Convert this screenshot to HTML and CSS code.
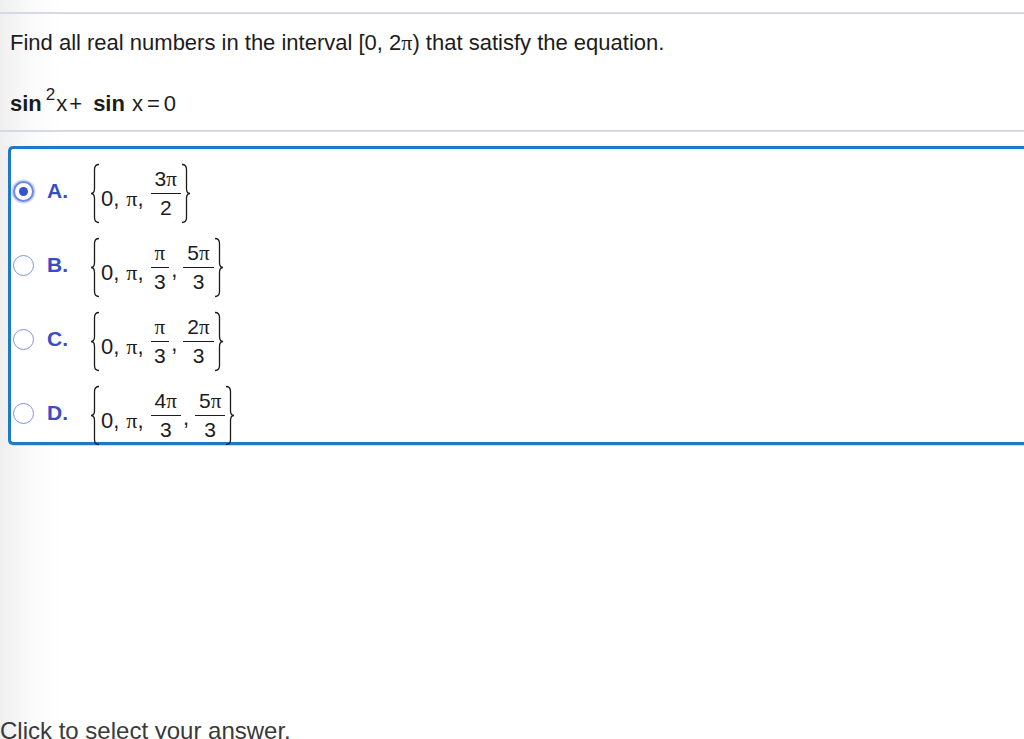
FILE: index.html
```html
<!DOCTYPE html>
<html lang="en">
  <head>
    <meta charset="UTF-8" />
    <meta name="viewport" content="width=device-width, initial-scale=1.0" />
    <title>Question</title>
    <link rel="stylesheet" href="styles.css">
  </head>
  <body>
    <div class="page">
      <div class="rule"></div>
      <p class="question">Find all real numbers in the interval [0, 2<i class="pi">π</i>) that satisfy the equation.</p>
      <p class="equation"><b>sin</b><sup>2</sup>x<span class="plus">+</span><b>sin</b><span class="arg">x</span><span class="eq">=</span>0</p>
      <div class="rule"></div>

      <div class="choices">
        <!-- A -->
        <div class="choice selected">
          <span class="radio"></span>
          <span class="letter">A.</span>
          <span class="set">
            <svg class="brace" viewBox="0 0 10 60"><path d="M9 1 Q4.5 1 4.5 6 L4.5 25 Q4.5 30 1 30 Q4.5 30 4.5 35 L4.5 54 Q4.5 59 9 59" /></svg>
            <span class="term">0,</span>
            <span class="term"><i class="pi">π</i>,</span>
            <span class="frac"><span class="num">3<i class="pi">π</i></span><span class="den">2</span></span>
            <svg class="brace" viewBox="0 0 10 60"><path d="M1 1 Q5.5 1 5.5 6 L5.5 25 Q5.5 30 9 30 Q5.5 30 5.5 35 L5.5 54 Q5.5 59 1 59" /></svg>
          </span>
        </div>
        <!-- B -->
        <div class="choice">
          <span class="radio"></span>
          <span class="letter">B.</span>
          <span class="set">
            <svg class="brace" viewBox="0 0 10 60"><path d="M9 1 Q4.5 1 4.5 6 L4.5 25 Q4.5 30 1 30 Q4.5 30 4.5 35 L4.5 54 Q4.5 59 9 59" /></svg>
            <span class="term">0,</span>
            <span class="term"><i class="pi">π</i>,</span>
            <span class="frac"><span class="num"><i class="pi">π</i></span><span class="den">3</span></span>
            <span class="comma">,</span>
            <span class="frac"><span class="num">5<i class="pi">π</i></span><span class="den">3</span></span>
            <svg class="brace" viewBox="0 0 10 60"><path d="M1 1 Q5.5 1 5.5 6 L5.5 25 Q5.5 30 9 30 Q5.5 30 5.5 35 L5.5 54 Q5.5 59 1 59" /></svg>
          </span>
        </div>
        <!-- C -->
        <div class="choice">
          <span class="radio"></span>
          <span class="letter">C.</span>
          <span class="set">
            <svg class="brace" viewBox="0 0 10 60"><path d="M9 1 Q4.5 1 4.5 6 L4.5 25 Q4.5 30 1 30 Q4.5 30 4.5 35 L4.5 54 Q4.5 59 9 59" /></svg>
            <span class="term">0,</span>
            <span class="term"><i class="pi">π</i>,</span>
            <span class="frac"><span class="num"><i class="pi">π</i></span><span class="den">3</span></span>
            <span class="comma">,</span>
            <span class="frac"><span class="num">2<i class="pi">π</i></span><span class="den">3</span></span>
            <svg class="brace" viewBox="0 0 10 60"><path d="M1 1 Q5.5 1 5.5 6 L5.5 25 Q5.5 30 9 30 Q5.5 30 5.5 35 L5.5 54 Q5.5 59 1 59" /></svg>
          </span>
        </div>
        <!-- D -->
        <div class="choice">
          <span class="radio"></span>
          <span class="letter">D.</span>
          <span class="set">
            <svg class="brace" viewBox="0 0 10 60"><path d="M9 1 Q4.5 1 4.5 6 L4.5 25 Q4.5 30 1 30 Q4.5 30 4.5 35 L4.5 54 Q4.5 59 9 59" /></svg>
            <span class="term">0,</span>
            <span class="term"><i class="pi">π</i>,</span>
            <span class="frac"><span class="num">4<i class="pi">π</i></span><span class="den">3</span></span>
            <span class="comma">,</span>
            <span class="frac"><span class="num">5<i class="pi">π</i></span><span class="den">3</span></span>
            <svg class="brace" viewBox="0 0 10 60"><path d="M1 1 Q5.5 1 5.5 6 L5.5 25 Q5.5 30 9 30 Q5.5 30 5.5 35 L5.5 54 Q5.5 59 1 59" /></svg>
          </span>
        </div>
      </div>

      <p class="hint">Click to select your answer.</p>
    </div>
  </body>
</html>
```

FILE: styles.css
```css
html,
body {
  margin: 0;
  height: 100%;
}
body {
  font-family: "Liberation Sans", Arial, sans-serif;
  color: #1c1c1c;
  background: linear-gradient(to right, #efefef 0, #fafafa 30px, #fff 60px);
  overflow: hidden;
}
.page {
  padding-top: 12px;
}
.rule {
  height: 2px;
  background: #d6d8e4;
}
.question {
  margin: 16px 0 0 10px;
  font-size: 22px;
  line-height: 26px;
}
.pi {
  font-family: "Liberation Serif", "Times New Roman", serif;
  font-style: normal;
}
.equation {
  margin: 35px 0 13px 10px;
  font-size: 22px;
  line-height: 26px;
}
.equation sup {
  font-size: 17px;
  vertical-align: 11px;
  line-height: 0;
  margin: 0 1px 0 4px;
}
.equation .plus {
  margin: 0 11px 0 2px;
}
.equation .arg {
  margin-left: 7px;
}
.equation .eq {
  margin: 0 4px;
}

/* answer box */
.choices {
  margin: 14px -20px 0 8px;
  border: 3px solid #1c7acb;
  border-right: none;
  border-radius: 5px 0 0 5px;
  padding: 5px 0 0;
  background: #fff;
  box-shadow: 0 1px 0 #c7def3;
}
.choice {
  display: flex;
  align-items: center;
  height: 74px;
}
.choice:last-child {
  margin-bottom: -8px;
}
.radio {
  flex: none;
  width: 21px;
  height: 21px;
  margin-left: 2px;
  border: 1.8px solid #8194dc;
  border-radius: 50%;
  box-sizing: border-box;
  position: relative;
  background: #fff;
}
.choice.selected .radio {
  border: 2px solid #6f88e3;
  box-shadow: 0 0 0 1.5px #ccd6f7;
}
.choice.selected .radio::after {
  content: "";
  position: absolute;
  left: 4px;
  top: 4px;
  width: 9px;
  height: 9px;
  border-radius: 50%;
  background: #3753cf;
}
.letter {
  margin-left: 13px;
  width: 33px;
  font-size: 21px;
  font-weight: bold;
  color: #3a4cc6;
}
.set {
  display: flex;
  align-items: center;
  margin-left: 10px;
  padding-top: 4px;
  font-size: 22px;
  line-height: 26px;
  color: #1c1c1c;
}
.brace {
  flex: none;
  width: 10px;
  height: 61px;
  fill: none;
  stroke: #1c1c1c;
  stroke-width: 1.3;
}
.term {
  padding-top: 11px;
  margin-right: 7px;
}
.term:first-of-type {
  margin-left: 1px;
}
.frac {
  display: inline-flex;
  flex-direction: column;
  text-align: center;
  font-size: 21px;
  line-height: 23px;
}
.frac .num {
  padding: 0 4px 2px;
  border-bottom: 1.5px solid #1c1c1c;
}
.frac .den {
  padding-top: 2px;
}
.comma {
  margin: 6px 6px 0 2px;
}

.hint {
  margin: 272px 0 0 0;
  font-size: 24px;
  line-height: 28px;
  color: #3a3a3a;
}
```
